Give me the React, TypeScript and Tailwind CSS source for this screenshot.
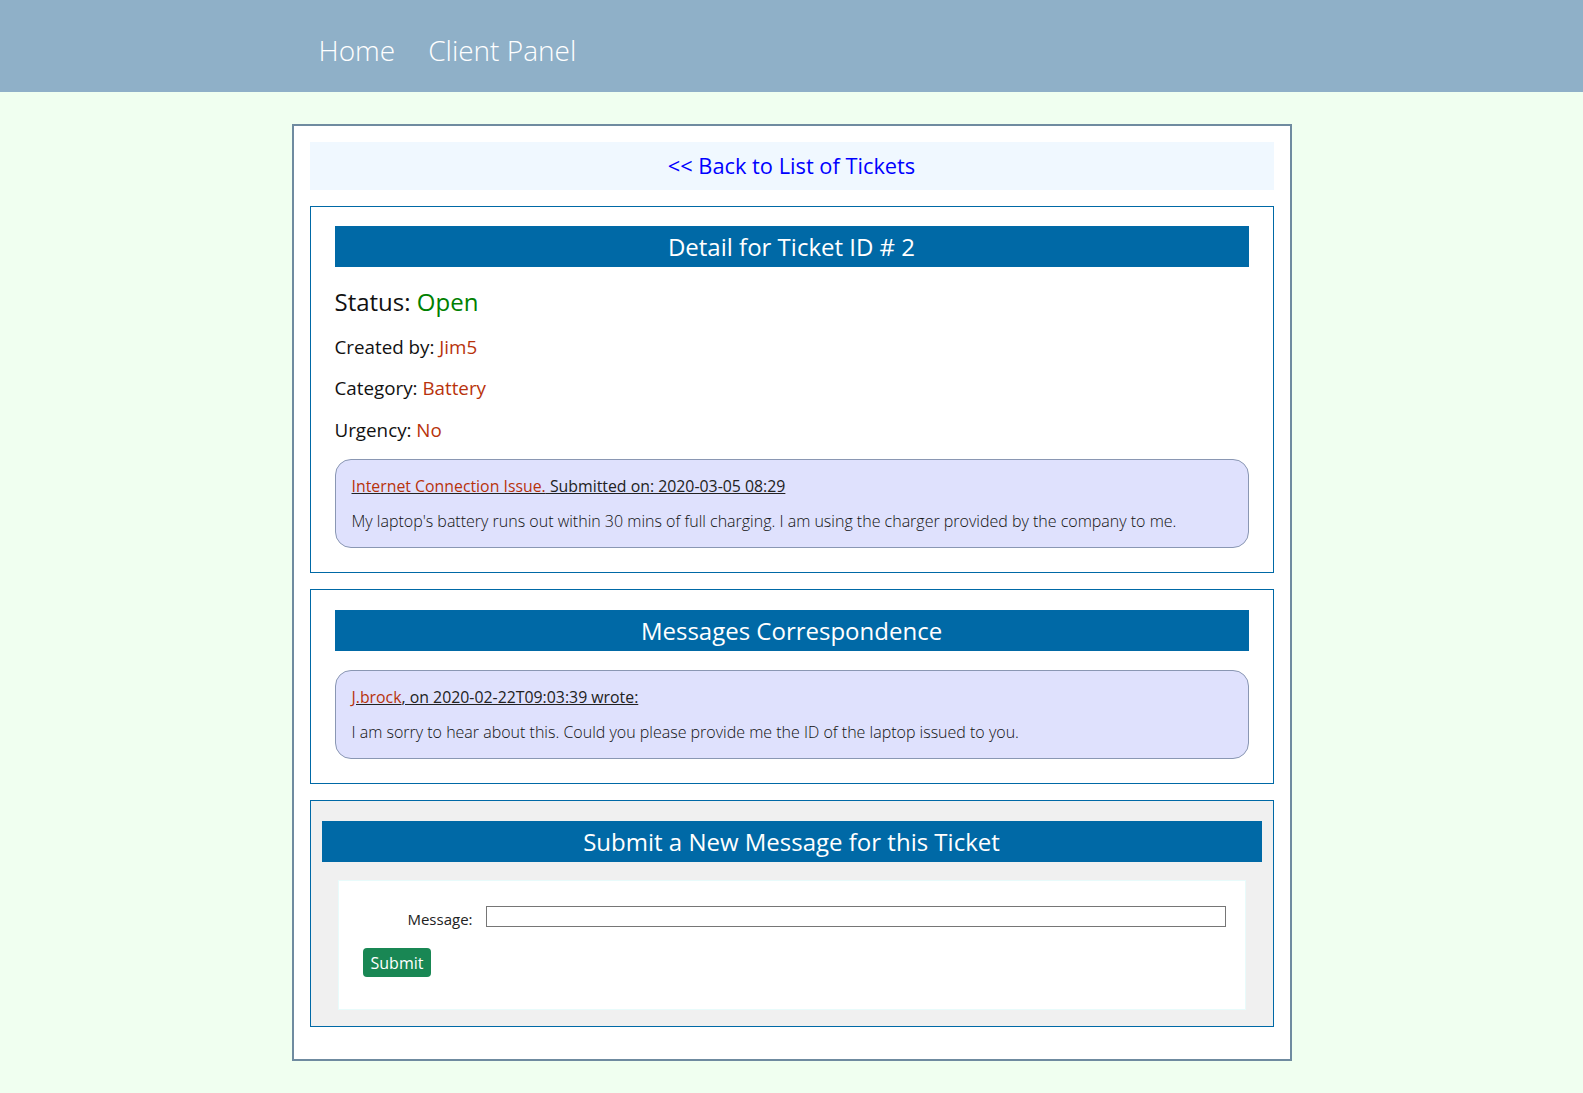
import React from "react";

const RED = "text-[#b8320b]";

function Heading({ children }: { children: React.ReactNode }) {
  return (
    <div className="flex h-[41px] items-center justify-center bg-[#0069a6] text-[24px] leading-[33px] text-white">
      {children}
    </div>
  );
}

function Bubble({
  title,
  body,
}: {
  title: React.ReactNode;
  body: string;
}) {
  return (
    <div className="flex flex-col gap-[14px] rounded-[16px] border border-[#8a97b3] bg-[#dfe1fd] px-4 py-[15px]">
      <div className="text-[15.85px] leading-[22px] text-[#222] underline">{title}</div>
      <div className="text-[16px] font-light leading-[21px] text-[#111]">{body}</div>
    </div>
  );
}

export default function App() {
  return (
    <div
      className="min-h-screen bg-[#f0fff0] pb-8"
      style={{ fontFamily: '"Open Sans", "Liberation Sans", sans-serif' }}
    >
      {/* top nav */}
      <header className="h-[92px] bg-[#8fb0c8]">
        <nav className="mx-auto flex h-full w-[1000px] items-center gap-[33px] pl-[27px] pt-2 text-[28px] font-light leading-[38px] text-white">
          <a href="#">Home</a>
          <a href="#">Client Panel</a>
        </nav>
      </header>

      <main className="mx-auto mt-[32px] flex w-[1000px] flex-col gap-4 border-2 border-[#6f8ba0] bg-white px-4 pb-[32px] pt-[16px]">
        <div className="flex h-[48px] items-center justify-center bg-[#f0f8ff]">
          <a href="#" className="text-[21.8px] leading-[30px] text-[#0000ff]">
            &lt;&lt; Back to List of Tickets
          </a>
        </div>

        {/* ticket detail */}
        <section className="border border-[#0069a6] px-6 pb-6 pt-[19px]">
          <Heading>Detail for Ticket ID # 2</Heading>
          <div className="mt-[18px] text-[24px] leading-[33px] text-[#111]">
            Status: <span className="text-[#008000]">Open</span>
          </div>
          <div className="mt-[17px] text-[18.8px] leading-[25px] text-[#111]">
            Created by: <span className={RED}>Jim5</span>
          </div>
          <div className="mt-[16px] text-[18.8px] leading-[25px] text-[#111]">
            Category: <span className={RED}>Battery</span>
          </div>
          <div className="mt-[17px] text-[18.8px] leading-[25px] text-[#111]">
            Urgency: <span className={RED}>No</span>
          </div>
          <div className="mt-[16px]">
            <Bubble
              title={
                <>
                  <span className={RED}>Internet Connection Issue.</span> Submitted on: 2020-03-05 08:29
                </>
              }
              body="My laptop's battery runs out within 30 mins of full charging. I am using the charger provided by the company to me."
            />
          </div>
        </section>

        {/* messages */}
        <section className="border border-[#0069a6] px-6 pb-6 pt-[20px]">
          <Heading>Messages Correspondence</Heading>
          <div className="mt-[19px]">
            <Bubble
              title={
                <>
                  <span className={RED}>J.brock</span>, on 2020-02-22T09:03:39 wrote:
                </>
              }
              body="I am sorry to hear about this. Could you please provide me the ID of the laptop issued to you."
            />
          </div>
        </section>

        {/* new message form */}
        <section className="border border-[#0069a6] bg-[#f0f0f0] px-[11px] pb-4 pt-[20px]">
          <Heading>Submit a New Message for this Ticket</Heading>
          <div className="mx-4 mt-[18px] h-[130px] border border-[#e8fbfb] bg-white pl-6 pr-[10px] pt-[25px]">
            <div className="flex items-start">
              <label className="mt-[3px] w-[110px] shrink-0 text-right text-[15px] leading-[21px] text-[#222]">Message:</label>
              <input
                type="text"
                className="ml-[13px] h-[21px] w-[740px] shrink-0 border border-[#767676] bg-white"
              />
            </div>
            <button className="mt-[18px] h-[29px] rounded-[4px] bg-[#198754] px-[8px] text-[16px] leading-[22px] text-white">
              Submit
            </button>
          </div>
        </section>
      </main>
    </div>
  );
}
